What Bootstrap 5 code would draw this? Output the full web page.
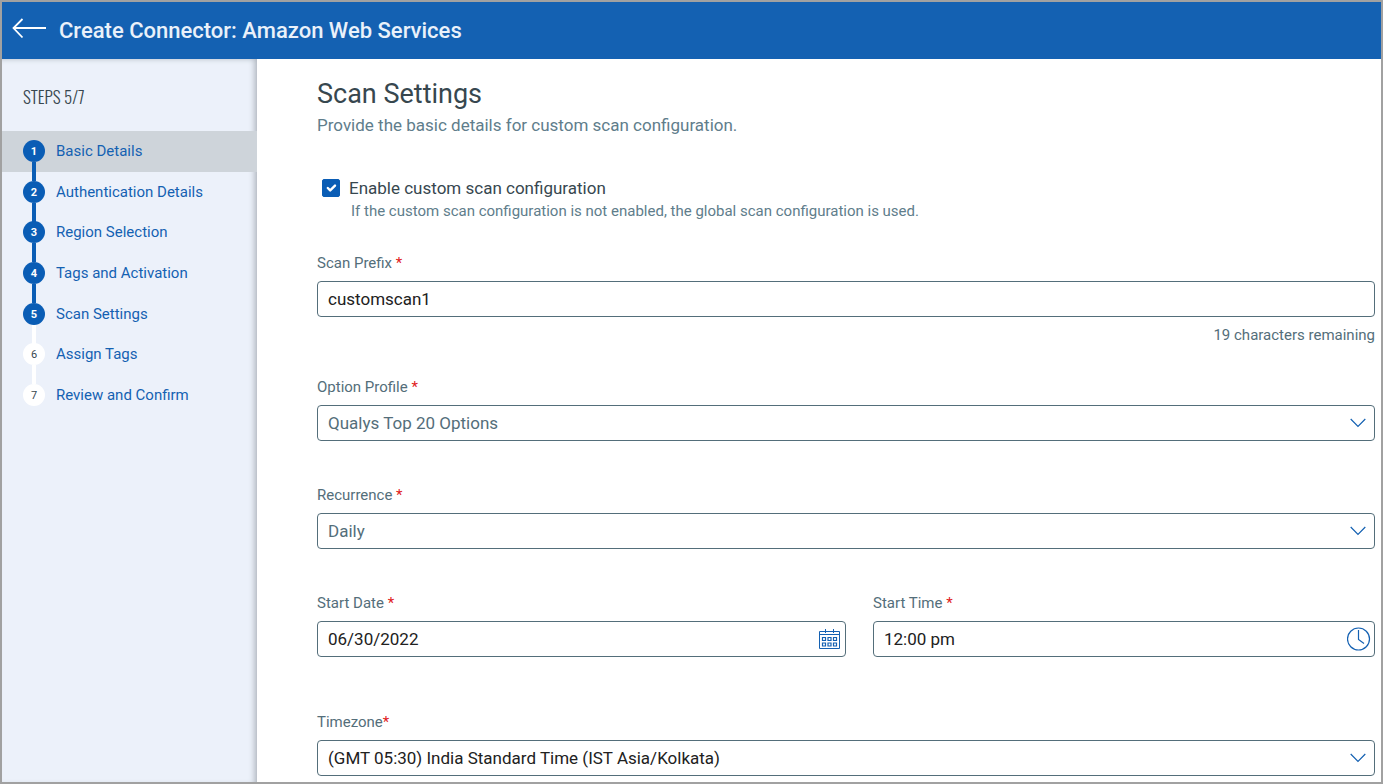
<!DOCTYPE html>
<html lang="en">
<head>
<meta charset="utf-8">
<meta name="viewport" content="width=device-width, initial-scale=1">
<title>Create Connector: Amazon Web Services</title>
<link href="https://cdn.jsdelivr.net/npm/bootstrap@5.3.0/dist/css/bootstrap.min.css" rel="stylesheet">
<style>
:root { --brand: #1461b2; --step: #0a5db5; --slate: #546e7a; }
body { font-family: Roboto, sans-serif; font-size: 17px; line-height: 24px; color: #212121; }
.app-frame { min-height: 100vh; border: 2px solid #a1a1a1; }
.app-bar { background: var(--brand); height: 57px; padding-left: 10px; gap: 11px; }
.app-bar h1 { font-size: 22px; line-height: 28px; font-weight: 500; color: #eaf1fa; }
.side-nav { width: 255px; background: #ecf1fa; padding-top: 26px; box-shadow: inset -6px 0 6px -4px #a9b0b8, inset 0 5px 5px -4px #c9d0da; }
.side-nav h2 { font-family: Oswald, "Roboto Condensed", Roboto, sans-serif; font-size: 17px; line-height: 24px; font-weight: 300; color: #37474f; margin: 0 0 22px 21px; }
.step-list { display: grid; grid-auto-rows: 1fr; height: 284px; }
.step-link { height: 100%; padding-left: 21px; gap: 11px; font-size: 15px; color: var(--brand); }
.step-current { background: #ced4da; }
.step-dot { position: relative; z-index: 1; width: 22px; height: 22px; border-radius: 50%; background: #fff; color: #37474f; font-size: 11px; line-height: 23px; text-align: center; }
.step-done .step-dot { background: var(--step); color: #fff; font-weight: 700; }
.step-dot::after { content: ""; position: absolute; z-index: -1; left: 9px; top: 22px; width: 4px; height: 19px; background: #fff; }
.step-linked .step-dot::after { background: var(--step); }
.step-list li:last-child .step-dot::after { display: none; }
.content-area { min-width: 0; padding: 18px 6px 6px 60px; }
.content-area h2 { font-size: 27px; line-height: 34px; font-weight: 400; color: #37474f; margin: 0 0 2px; }
.intro-text { color: #607d8b; margin-bottom: 39px; }
.check-row { gap: 9px; padding-left: 5px; }
.check-row .form-check-input { width: 18px; height: 18px; margin: 0; border-radius: 2px; flex: none; }
.check-row .form-check-input:checked { background-color: var(--step); border-color: var(--step); background-size: 16px; }
.check-row label { color: #37474f; }
.help-text { font-size: 15px; line-height: 20px; color: #607d8b; padding-left: 34px; margin: 1px 0 32px; }
.field-label { display: block; font-size: 15px; line-height: 20px; color: var(--slate); margin-bottom: 8px; }
.field-label span { color: #e02020; }
.field-box { height: 36px; padding: 0 10px; border: 1px solid var(--slate); border-radius: 4px; font-size: 17px; color: #212121; background-color: #fff; }
.field-select { padding-top: 1px; background: #fff url("data:image/svg+xml,%3Csvg xmlns='http://www.w3.org/2000/svg' viewBox='0 0 16 10'%3E%3Cpath d='M.7 1 8 8.500 15.300 1' fill='none' stroke='%231461b2' stroke-width='1.200'/%3E%3C/svg%3E") no-repeat right 8px center / 16px 10px; }
.field-muted { color: var(--slate); }
.field-group { margin-bottom: 44px; }
.count-text { font-size: 15px; line-height: 20px; color: var(--slate); margin: 8px 0 32px; }
.date-row { gap: 27px; margin-bottom: 55px; }
.date-col { flex: 529 1 0; } .time-col { flex: 502 1 0; }
.icon-btn { position: absolute; right: 4px; top: 6px; width: 24px; height: 24px; padding: 0; border: 0; background: none; display: flex; color: var(--brand); }
</style>
</head>
<body>
<div class="app-frame d-flex flex-column">
  <header class="app-bar d-flex align-items-center">
    <button type="button" class="btn p-0 border-0 d-flex mb-1" aria-label="Back">
      <svg width="36" height="22" viewBox="0 0 36 22" fill="none" stroke="#fff" stroke-width="1.800"><path d="M10.500 1 1.500 10l9 9.500M1.500 10H34"/></svg>
    </button>
    <h1 class="mb-0">Create Connector: Amazon Web Services</h1>
  </header>
  <div class="d-flex flex-grow-1">
    <nav class="side-nav flex-shrink-0" aria-label="Steps">
      <h2>STEPS 5/7</h2>
      <ol class="step-list list-unstyled mb-0">
        <li class="step-done step-linked step-current"><a href="#" class="step-link d-flex align-items-center text-decoration-none"><span class="step-dot">1</span>Basic Details</a></li>
        <li class="step-done step-linked"><a href="#" class="step-link d-flex align-items-center text-decoration-none"><span class="step-dot">2</span>Authentication Details</a></li>
        <li class="step-done step-linked"><a href="#" class="step-link d-flex align-items-center text-decoration-none"><span class="step-dot">3</span>Region Selection</a></li>
        <li class="step-done step-linked"><a href="#" class="step-link d-flex align-items-center text-decoration-none"><span class="step-dot">4</span>Tags and Activation</a></li>
        <li class="step-done"><a href="#" class="step-link d-flex align-items-center text-decoration-none"><span class="step-dot">5</span>Scan Settings</a></li>
        <li><a href="#" class="step-link d-flex align-items-center text-decoration-none"><span class="step-dot">6</span>Assign Tags</a></li>
        <li><a href="#" class="step-link d-flex align-items-center text-decoration-none"><span class="step-dot">7</span>Review and Confirm</a></li>
      </ol>
    </nav>
    <main class="content-area flex-grow-1">
      <h2>Scan Settings</h2>
      <p class="intro-text">Provide the basic details for custom scan configuration.</p>
      <form>
        <div class="check-row d-flex align-items-center">
          <input class="form-check-input" type="checkbox" id="enable" checked>
          <label for="enable">Enable custom scan configuration</label>
        </div>
        <p class="help-text">If the custom scan configuration is not enabled, the global scan configuration is used.</p>
        <label class="field-label" for="prefix">Scan Prefix <span>*</span></label>
        <input class="field-box form-control" type="text" id="prefix" value="customscan1">
        <p class="count-text text-end">19 characters remaining</p>
        <div class="field-group">
          <label class="field-label" for="profile">Option Profile <span>*</span></label>
          <select class="field-box field-select field-muted form-select" id="profile"><option>Qualys Top 20 Options</option></select>
        </div>
        <div class="field-group">
          <label class="field-label" for="recurrence">Recurrence <span>*</span></label>
          <select class="field-box field-select field-muted form-select" id="recurrence"><option>Daily</option></select>
        </div>
        <div class="date-row d-flex">
          <div class="date-col">
            <label class="field-label" for="date">Start Date <span>*</span></label>
            <div class="position-relative">
              <input class="field-box form-control" type="text" id="date" value="06/30/2022">
              <button type="button" class="icon-btn" aria-label="Choose date">
                <svg width="24" height="24" viewBox="0 0 24 24" fill="none" stroke="currentColor"><path d="M1.500 4.500h20v17h-20zM1.500 7.500h20M7.500 2v4M15.500 2v4"/><path d="M4.500 10.500h3v3h-3zm5.500 0h3v3h-3zm5.500 0h3v3h-3zM4.500 16h3v3h-3zm5.500 0h3v3h-3zm5.500 0h3v3h-3z" stroke-width="1.200"/></svg>
              </button>
            </div>
          </div>
          <div class="time-col">
            <label class="field-label" for="time">Start Time <span>*</span></label>
            <div class="position-relative">
              <input class="field-box form-control" type="text" id="time" value="12:00 pm">
              <button type="button" class="icon-btn" aria-label="Choose time">
                <svg width="24" height="24" viewBox="0 0 24 24" fill="none" stroke="currentColor" stroke-width="1.200"><circle cx="11.500" cy="12" r="11"/><path d="M11.500 3v9.500l5.500 4"/></svg>
              </button>
            </div>
          </div>
        </div>
        <label class="field-label" for="zone">Timezone<span>*</span></label>
        <select class="field-box field-select form-select" id="zone"><option>(GMT 05:30) India Standard Time (IST Asia/Kolkata)</option></select>
      </form>
    </main>
  </div>
</div>
<script src="https://cdn.jsdelivr.net/npm/bootstrap@5.3.0/dist/js/bootstrap.bundle.min.js"></script>
</body>
</html>
